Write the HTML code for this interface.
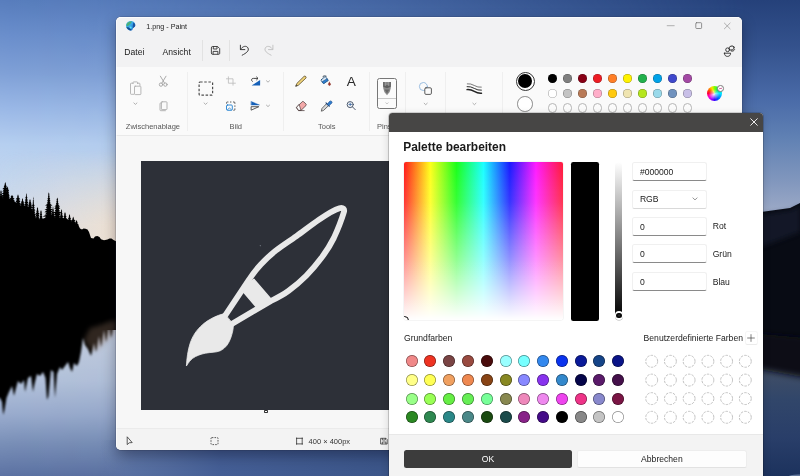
<!DOCTYPE html>
<html lang="de">
<head>
<meta charset="utf-8">
<title>1.png - Paint</title>
<style>
*{box-sizing:border-box;margin:0;padding:0}
html,body{width:800px;height:476px;overflow:hidden;background:#5a7ebb}
body{font-family:"Liberation Sans",sans-serif;color:#1b1b1b;position:relative}
.abs{position:absolute}
#win>.abs,#dlg>.abs{will-change:transform}
#bg{position:absolute;left:0;top:0;width:800px;height:476px}
#win{position:absolute;left:115.6px;top:17px;width:626.4px;height:433px;background:#f6f6f6;border-radius:5px;overflow:hidden;box-shadow:0 6px 14px rgba(0,0,20,.35),0 0 0 .5px rgba(40,50,70,.35)}
#titlebar{position:absolute;left:0;top:0;width:100%;height:49.5px;background:#f2f2f3}
#ribbon{position:absolute;left:0;top:49.5px;width:100%;height:69px;background:#fafafa;border-bottom:1px solid #e9e9e9}
#work{position:absolute;left:0;top:118.5px;width:100%;height:292px;background:#f7f7f7}
#status{position:absolute;left:0;top:410.5px;width:100%;height:23px;background:#f3f3f3;border-top:1px solid #ebebeb}
.t{position:absolute;white-space:nowrap;line-height:1}
.sep{position:absolute;width:1px;background:#e6e6e6}
.glabel{position:absolute;font-size:7.5px;color:#6b6b6b;top:105.5px;line-height:1;white-space:nowrap}
svg{position:absolute;overflow:visible}
#dlg{position:absolute;left:388.5px;top:113px;width:374.5px;height:380px;background:#fff;border-radius:3.5px 3.5px 0 0;overflow:hidden;box-shadow:0 0 0 .6px rgba(0,0,0,.3),0 2px 9px rgba(0,0,0,.16)}
#dlgbar{position:absolute;left:0;top:0;width:100%;height:18.5px;background:#474645}
#dlgfoot{position:absolute;left:0;top:321px;width:100%;height:60px;background:#f3f3f3;border-top:1px solid #e8e8e8}
.inp{position:absolute;left:244px;width:74.5px;height:19px;border:1px solid #f0f0f0;border-bottom:1px solid #8a8a8a;border-radius:2.5px;background:#fff;font-size:8.6px;line-height:18px;padding-left:6.5px;color:#1a1a1a}
.lbl{position:absolute;left:324px;font-size:8.6px;line-height:1;color:#1a1a1a}
.sw{position:absolute;width:12px;height:12px;border-radius:50%;box-shadow:inset 0 0 0 .7px rgba(0,0,0,.45)}
.cw{position:absolute;width:12.4px;height:12.4px;border-radius:50%;border:.8px dashed #a9a9a9}
.pc{position:absolute;width:9.4px;height:9.4px;border-radius:50%;box-shadow:inset 0 0 0 .6px rgba(0,0,0,.35)}
.pe{position:absolute;width:9.4px;height:9.4px;border-radius:50%;border:.8px solid #b5b5b5;background:#fbfbfb}
</style>
</head>
<body>
<!--BG-->
<svg id="bg" width="800" height="476" viewBox="0 0 800 476">
<defs>
<linearGradient id="skyL" x1="0" y1="0" x2="0" y2="1">
<stop offset="0" stop-color="#587dbd"/><stop offset=".076" stop-color="#6b8fcc"/><stop offset=".151" stop-color="#7fa0d6"/><stop offset=".227" stop-color="#9ab8e6"/><stop offset=".303" stop-color="#b6cff0"/><stop offset=".38" stop-color="#c3d6ee"/><stop offset=".5" stop-color="#d8dde6"/><stop offset=".7" stop-color="#c6d0e2"/><stop offset=".8" stop-color="#b4c3dc"/><stop offset=".87" stop-color="#9aacce"/><stop offset=".93" stop-color="#7a90b8"/><stop offset="1" stop-color="#5c72a3"/>
</linearGradient>
<linearGradient id="skyR" x1="0" y1="0" x2="0" y2="1">
<stop offset="0" stop-color="#25417a"/><stop offset=".1" stop-color="#34528d"/><stop offset=".21" stop-color="#4a6ba8"/><stop offset=".286" stop-color="#5f80b3"/><stop offset=".378" stop-color="#8096bd"/><stop offset=".44" stop-color="#9aa8c6"/><stop offset=".78" stop-color="#404e66"/><stop offset=".84" stop-color="#31466a"/><stop offset=".92" stop-color="#293e69"/><stop offset="1" stop-color="#1c325d"/>
</linearGradient>
<linearGradient id="hm" x1="0" y1="0" x2="1" y2="0">
<stop offset="0" stop-color="#000"/><stop offset=".12" stop-color="#080808"/><stop offset=".5" stop-color="#6e6e6e"/><stop offset=".93" stop-color="#fff"/><stop offset="1" stop-color="#fff"/>
</linearGradient>
<mask id="mk"><rect width="800" height="476" fill="url(#hm)"/></mask>
<linearGradient id="warm" x1="0" y1="0" x2="1" y2="0"><stop offset="0" stop-color="#e9e1dc" stop-opacity=".05"/><stop offset=".5" stop-color="#ece1d6" stop-opacity=".62"/><stop offset="1" stop-color="#f1e1cf" stop-opacity="1"/></linearGradient>
<linearGradient id="warmv" x1="0" y1="0" x2="0" y2="1"><stop offset="0" stop-color="#fff" stop-opacity="0"/><stop offset=".75" stop-color="#fff" stop-opacity="1"/><stop offset="1" stop-color="#fff" stop-opacity="1"/></linearGradient>
<mask id="wm"><rect x="0" y="150" width="130" height="100" fill="url(#warmv)"/></mask>
<filter id="b1" x="-20%" y="-20%" width="140%" height="140%"><feGaussianBlur stdDeviation="1.1"/></filter>
<filter id="b2" x="-20%" y="-20%" width="140%" height="140%"><feGaussianBlur stdDeviation="2.5"/></filter>
<filter id="b3" x="-20%" y="-40%" width="140%" height="180%"><feGaussianBlur stdDeviation="3.2"/></filter>
<filter id="b0" x="-20%" y="-20%" width="140%" height="140%"><feGaussianBlur stdDeviation=".45"/></filter>
</defs>
<rect width="800" height="476" fill="url(#skyL)"/>
<rect width="800" height="476" fill="url(#skyR)" mask="url(#mk)"/>
<rect x="0" y="150" width="130" height="100" fill="url(#warm)" mask="url(#wm)"/>
<linearGradient id="bot" gradientUnits="userSpaceOnUse" x1="100" y1="0" x2="400" y2="0"><stop offset="0" stop-color="#6077a8" stop-opacity="0"/><stop offset=".12" stop-color="#566fa2" stop-opacity=".7"/><stop offset=".4" stop-color="#445e95" stop-opacity="1"/><stop offset="1" stop-color="#3b5588" stop-opacity="1"/></linearGradient>
<rect x="100" y="440" width="300" height="36" fill="url(#bot)"/>
<!-- right hill -->
<path d="M730 219 L763 211.7 L790 208 L800 203 L800 360 L730 350 Z" fill="#080b14"/>
<path d="M730 222 L763 214.5 L790 210.5 L800 206 L800 232 L763 246 L730 250Z" fill="#1a2438" opacity=".55" filter="url(#b2)"/>
<path d="M720 330 L830 340 L830 382 L763 370 L720 364 Z" fill="#080b14" filter="url(#b3)"/>
<ellipse cx="798" cy="477" rx="10" ry="2.6" fill="#93a8c8" opacity=".6" filter="url(#b0)"/>
<!-- left trees -->
<g filter="url(#b0)" fill="#030406">
<path d="M-6 199 L10 199.5 L14 201 L20 205.5 L30 207.5 L34 213 L36 218.5 L40 219.5 L45 218 L52 218.6 L58 217.8 L67 219 L72 221.5 L78 224.5 L80 228.5 L82 229.6 L83.5 228.4 L85.5 228.8 L87.5 229.6 L89 232 L91 238 L93.5 238.4 L95 236.6 L97.2 236 L99.5 237 L101 239.2 L104 240.3 L107.5 239.4 L109.5 238.4 L111.5 238.6 L113.5 240 L116 241.2 L126 243 L126 330 L-6 330Z"/>
<path d="M5.3 182.0 L6.1 184.4 L5.7 184.6 L6.9 186.8 L6.0 187.0 L8.2 189.1 L6.6 189.4 L8.2 191.5 L6.6 191.8 L8.9 193.9 L6.9 194.1 L9.8 196.2 L7.3 196.5 L9.3 198.6 L7.1 198.9 L10.8 201.0 L7.8 201.2 L10.8 205.0 L-0.2 205.0 L2.8 201.2 L-0.2 201.0 L3.5 198.9 L1.3 198.6 L3.3 196.5 L0.8 196.2 L3.7 194.1 L1.7 193.9 L4.0 191.8 L2.4 191.5 L4.0 189.4 L2.4 189.1 L4.6 187.0 L3.7 186.8 L4.9 184.6 L4.5 184.4Z"/>
<path d="M7.6 186.2 L8.3 188.5 L7.9 188.8 L9.1 190.8 L8.3 191.0 L9.0 193.1 L8.2 193.3 L9.7 195.4 L8.6 195.7 L9.8 197.7 L8.6 197.9 L11.7 200.0 L9.5 200.2 L11.1 204.0 L4.1 204.0 L5.7 200.2 L3.5 200.0 L6.6 197.9 L5.4 197.7 L6.6 195.7 L5.5 195.4 L7.0 193.3 L6.2 193.1 L6.9 191.0 L6.1 190.8 L7.3 188.8 L6.9 188.5Z"/>
<path d="M1.0 190.0 L1.9 192.5 L1.4 192.8 L2.1 195.0 L1.5 195.2 L3.9 197.5 L2.3 197.8 L4.7 200.0 L2.7 200.2 L3.9 204.0 L-1.9 204.0 L-0.7 200.2 L-2.7 200.0 L-0.3 197.8 L-1.9 197.5 L0.5 195.2 L-0.1 195.0 L0.6 192.8 L0.1 192.5Z"/>
<path d="M12.0 195.0 L13.5 197.0 L12.7 197.2 L14.7 199.0 L13.2 199.2 L14.9 201.0 L13.3 201.2 L15.6 205.0 L8.4 205.0 L10.7 201.2 L9.1 201.0 L10.8 199.2 L9.3 199.0 L11.3 197.2 L10.5 197.0Z"/>
<path d="M18.0 194.2 L18.9 196.8 L18.4 197.0 L20.3 199.3 L19.0 199.6 L20.4 201.9 L19.1 202.1 L21.5 204.4 L19.6 204.7 L22.4 207.0 L20.0 207.2 L23.2 211.0 L12.8 211.0 L16.0 207.2 L13.6 207.0 L16.4 204.7 L14.5 204.4 L16.9 202.1 L15.6 201.9 L17.0 199.6 L15.7 199.3 L17.6 197.0 L17.1 196.8Z"/>
<path d="M22.5 198.0 L23.2 200.2 L22.8 200.5 L24.2 202.5 L23.3 202.8 L24.9 204.8 L23.6 205.0 L26.3 207.0 L24.2 207.2 L25.7 211.0 L19.3 211.0 L20.8 207.2 L18.7 207.0 L21.4 205.0 L20.1 204.8 L21.7 202.8 L20.8 202.5 L22.2 200.5 L21.8 200.2Z"/>
<path d="M26.4 193.0 L26.9 195.5 L26.6 195.8 L27.5 198.0 L26.9 198.2 L27.8 200.5 L27.0 200.8 L28.4 203.0 L27.3 203.2 L28.6 205.5 L27.4 205.8 L28.7 208.0 L27.4 208.2 L29.0 212.0 L23.8 212.0 L25.4 208.2 L24.1 208.0 L25.4 205.8 L24.2 205.5 L25.5 203.2 L24.4 203.0 L25.8 200.8 L25.0 200.5 L25.9 198.2 L25.3 198.0 L26.2 195.8 L25.9 195.5Z"/>
<path d="M30.0 199.0 L30.9 201.2 L30.4 201.4 L31.6 203.4 L30.7 203.7 L32.2 205.6 L31.0 205.8 L32.7 207.8 L31.2 208.1 L32.6 210.0 L31.2 210.2 L32.9 214.0 L27.1 214.0 L28.8 210.2 L27.4 210.0 L28.8 208.1 L27.3 207.8 L29.0 205.8 L27.8 205.6 L29.3 203.7 L28.4 203.4 L29.6 201.4 L29.1 201.2Z"/>
<path d="M33.3 196.6 L33.6 198.9 L33.4 199.2 L33.9 201.2 L33.6 201.5 L34.0 203.5 L33.6 203.8 L34.7 205.8 L33.9 206.1 L34.7 208.1 L33.9 208.4 L35.4 210.5 L34.3 210.7 L35.2 212.8 L34.1 213.0 L36.2 215.1 L34.6 215.3 L36.4 217.4 L34.7 217.6 L35.3 219.7 L34.2 219.9 L35.8 222.0 L34.4 222.2 L36.3 226.0 L30.3 226.0 L32.2 222.2 L30.8 222.0 L32.4 219.9 L31.3 219.7 L31.9 217.6 L30.2 217.4 L32.0 215.3 L30.4 215.1 L32.5 213.0 L31.4 212.8 L32.3 210.7 L31.2 210.5 L32.7 208.4 L31.9 208.1 L32.7 206.1 L31.9 205.8 L33.0 203.8 L32.6 203.5 L33.0 201.5 L32.7 201.2 L33.2 199.2 L33.0 198.9Z"/>
<path d="M37.5 207.0 L38.3 209.3 L37.9 209.6 L38.7 211.7 L38.0 211.9 L39.7 214.0 L38.5 214.2 L39.6 216.3 L38.4 216.6 L39.5 218.7 L38.4 218.9 L40.9 221.0 L39.0 221.2 L40.7 225.0 L34.3 225.0 L36.0 221.2 L34.1 221.0 L36.6 218.9 L35.5 218.7 L36.6 216.6 L35.4 216.3 L36.5 214.2 L35.3 214.0 L37.0 211.9 L36.3 211.7 L37.1 209.6 L36.7 209.3Z"/>
<path d="M41.0 210.0 L41.9 212.4 L41.4 212.7 L42.2 214.8 L41.5 215.1 L42.5 217.2 L41.7 217.4 L43.3 219.6 L42.1 219.8 L45.1 222.0 L42.8 222.2 L44.2 226.0 L37.8 226.0 L39.2 222.2 L36.9 222.0 L39.9 219.8 L38.7 219.6 L40.3 217.4 L39.5 217.2 L40.5 215.1 L39.8 214.8 L40.6 212.7 L40.1 212.4Z"/>
<path d="M48.8 192.3 L49.5 194.5 L49.1 194.8 L49.7 196.7 L49.2 197.0 L50.2 198.9 L49.5 199.2 L50.5 201.1 L49.6 201.4 L50.8 203.3 L49.7 203.6 L52.5 205.5 L50.5 205.8 L51.7 207.8 L50.1 208.0 L53.1 210.0 L50.7 210.2 L53.2 212.2 L50.8 212.4 L52.9 214.4 L50.6 214.6 L55.1 216.6 L51.6 216.8 L53.4 218.8 L50.9 219.0 L55.7 221.0 L51.9 221.2 L55.2 225.0 L42.4 225.0 L45.7 221.2 L41.9 221.0 L46.7 219.0 L44.2 218.8 L46.0 216.8 L42.5 216.6 L47.0 214.6 L44.7 214.4 L46.8 212.4 L44.4 212.2 L46.9 210.2 L44.5 210.0 L47.5 208.0 L45.9 207.8 L47.1 205.8 L45.1 205.5 L47.9 203.6 L46.8 203.3 L48.0 201.4 L47.1 201.1 L48.1 199.2 L47.4 198.9 L48.4 197.0 L47.9 196.7 L48.5 194.8 L48.1 194.5Z"/>
<path d="M53.0 206.0 L53.4 208.3 L53.2 208.5 L54.0 210.6 L53.4 210.8 L54.2 212.9 L53.6 213.1 L54.7 215.1 L53.7 215.4 L56.0 217.4 L54.4 217.7 L56.3 219.7 L54.5 220.0 L55.8 222.0 L54.3 222.2 L56.2 226.0 L49.8 226.0 L51.7 222.2 L50.2 222.0 L51.5 220.0 L49.7 219.7 L51.6 217.7 L50.0 217.4 L52.3 215.4 L51.3 215.1 L52.4 213.1 L51.8 212.9 L52.6 210.8 L52.0 210.6 L52.8 208.5 L52.6 208.3Z"/>
<path d="M57.3 197.5 L58.1 199.7 L57.7 200.0 L58.3 202.0 L57.8 202.2 L58.9 204.2 L58.0 204.4 L60.1 206.4 L58.5 206.7 L60.3 208.6 L58.7 208.9 L59.8 210.9 L58.4 211.1 L62.2 213.1 L59.5 213.3 L60.8 215.3 L58.9 215.6 L61.3 217.5 L59.1 217.8 L63.3 219.8 L60.0 220.0 L62.4 222.0 L59.6 222.2 L62.9 226.0 L51.6 226.0 L55.0 222.2 L52.2 222.0 L54.6 220.0 L51.3 219.8 L55.5 217.8 L53.3 217.5 L55.7 215.6 L53.8 215.3 L55.1 213.3 L52.4 213.1 L56.2 211.1 L54.8 210.9 L55.9 208.9 L54.3 208.6 L56.1 206.7 L54.5 206.4 L56.6 204.4 L55.7 204.2 L56.8 202.2 L56.3 202.0 L56.9 200.0 L56.5 199.7Z"/>
<path d="M61.5 209.0 L62.2 211.6 L61.8 211.8 L62.6 214.2 L62.0 214.4 L63.2 216.8 L62.2 217.1 L64.5 219.4 L62.8 219.7 L64.4 222.0 L62.8 222.2 L65.0 226.0 L58.0 226.0 L60.2 222.2 L58.6 222.0 L60.2 219.7 L58.5 219.4 L60.8 217.1 L59.8 216.8 L61.0 214.4 L60.4 214.2 L61.2 211.8 L60.8 211.6Z"/>
<path d="M65.0 212.0 L66.0 214.5 L65.4 214.8 L66.6 217.0 L65.7 217.2 L67.4 219.5 L66.1 219.8 L69.1 222.0 L66.8 222.2 L68.2 226.0 L61.8 226.0 L63.2 222.2 L60.9 222.0 L63.9 219.8 L62.6 219.5 L64.3 217.2 L63.4 217.0 L64.6 214.8 L64.0 214.5Z"/>
<path d="M69.5 214.0 L70.3 216.5 L69.9 216.8 L71.1 219.0 L70.2 219.2 L72.2 221.5 L70.7 221.8 L71.8 224.0 L70.6 224.2 L72.4 228.0 L66.6 228.0 L68.4 224.2 L67.2 224.0 L68.3 221.8 L66.8 221.5 L68.8 219.2 L67.9 219.0 L69.1 216.8 L68.7 216.5Z"/>
<path d="M73.2 216.4 L74.0 218.7 L73.6 219.0 L75.6 221.0 L74.3 221.3 L76.5 223.4 L74.7 223.6 L76.2 225.7 L74.6 225.9 L76.7 228.0 L74.8 228.2 L77.5 232.0 L68.9 232.0 L71.6 228.2 L69.7 228.0 L71.8 225.9 L70.2 225.7 L71.7 223.6 L69.9 223.4 L72.1 221.3 L70.8 221.0 L72.8 219.0 L72.4 218.7Z"/>
<path d="M76.5 220.0 L77.7 222.7 L77.1 222.9 L79.0 225.3 L77.6 225.6 L78.9 228.0 L77.6 228.2 L79.4 232.0 L73.6 232.0 L75.4 228.2 L74.1 228.0 L75.4 225.6 L74.0 225.3 L75.9 222.9 L75.3 222.7Z"/>
</g>
<g filter="url(#b1)" fill="#030406">
<path d="M-12 300 L130 300 L130 318 L118 322 L114 324 L111 338 L109 326 L106 342 L104 330 L101 347 L99 336 L96 352 L94 343 L91 356 L88 349 L85 345 L83 338 L81 352 L79 362 L77 366 L74 363 L72 372 L70 368 L68 362 L65 366 L62 370 L60 367 L57 374 L55 398 L53.5 372 L51 370 L48.5 396 L47 400 L45.5 378 L43 372 L40 376 L37 374 L34.5 384 L33 392 L31 376 L28 378 L25 392 L24 380 L21 384 L18 381 L15.5 390 L14 396 L12 386 L9 392 L6.5 398 L4.5 410 L3.2 415 L2 402 L0 398 L-12 398 Z"/>
</g>
<path d="M84 340 L90 328 L98 326 L108 322 L116 320 L116 332 L108 340 L100 348 L92 352 Z" fill="#8a6e5c" opacity=".35" filter="url(#b2)"/>
</svg>

<!--WIN-->
<div id="win"><div class="abs" style="left:-115.6px;top:-17px;width:800px;height:476px">
<div id="titlebar" style="left:115px;top:17px;width:628px"></div>
<div id="ribbon" style="left:115px;top:66.5px;width:628px"></div>
<div id="work" style="left:115px;top:135.5px;width:628px"></div>
<div id="status" style="left:115px;top:427.5px;width:628px"></div>
<div class="t" style="left:146.3px;top:23.30px;font-size:7.2px;color:#222;">1.png - Paint</div>
<div class="t" style="left:124.3px;top:47.50px;font-size:8.6px;color:#1b1b1b;">Datei</div>
<div class="t" style="left:162.6px;top:47.50px;font-size:8.6px;color:#1b1b1b;">Ansicht</div>
<div class="t" style="left:125.8px;top:122.85px;font-size:7.5px;color:#585858;">Zwischenablage</div>
<div class="t" style="left:229.5px;top:122.85px;font-size:7.5px;color:#585858;">Bild</div>
<div class="t" style="left:318px;top:122.85px;font-size:7.5px;color:#585858;">Tools</div>
<div class="t" style="left:377px;top:122.85px;font-size:7.5px;color:#585858;">Pinsel</div>
<div class="t" style="left:416px;top:122.85px;font-size:7.5px;color:#585858;">Formen</div>
<div class="t" style="left:466px;top:122.85px;font-size:7.5px;color:#585858;">Größe</div>
<div class="t" style="left:606px;top:122.85px;font-size:7.5px;color:#585858;">Farben</div>
<div class="t" style="left:308.6px;top:438.25px;font-size:7.5px;color:#333;">400 × 400px</div>
<div class="t" style="left:393px;top:438.25px;font-size:7.5px;color:#333;">Größe: 3,2KB</div>
<div class="t" style="left:346.75px;top:75.15px;font-size:13.7px;color:#2a2a2a;">A</div>
<div class="sep" style="left:201.5px;top:40px;height:21px;background:#e2e2e2"></div>
<div class="sep" style="left:229.2px;top:40px;height:21px;background:#e2e2e2"></div>
<div class="sep" style="left:187px;top:72px;height:59px;background:#efefef"></div>
<div class="sep" style="left:283px;top:72px;height:59px;background:#efefef"></div>
<div class="sep" style="left:369px;top:72px;height:59px;background:#efefef"></div>
<div class="sep" style="left:404.6px;top:72px;height:59px;background:#efefef"></div>
<div class="sep" style="left:445.4px;top:72px;height:59px;background:#efefef"></div>
<div class="sep" style="left:501.5px;top:72px;height:59px;background:#efefef"></div>
<div class="abs" style="left:140.7px;top:161px;width:249.3px;height:248.8px;background:#2d3038"></div>
<div class="abs" style="left:264.1px;top:409.7px;width:3.7px;height:3.7px;background:#fff;border:.8px solid #333;border-radius:.8px"></div>
<div class="abs" style="left:377px;top:78.4px;width:20px;height:30.4px;border:.9px solid #777;border-radius:2.5px;background:#fbfbfb"></div>
<div class="abs" style="left:378px;top:98.3px;width:18px;height:.7px;background:#c9c9c9"></div>
<div class="pc" style="left:547.7px;top:73.9px;background:#000000"></div>
<div class="pc" style="left:562.7px;top:73.9px;background:#7f7f7f"></div>
<div class="pc" style="left:577.7px;top:73.9px;background:#880015"></div>
<div class="pc" style="left:592.7px;top:73.9px;background:#ed1c24"></div>
<div class="pc" style="left:607.7px;top:73.9px;background:#ff7f27"></div>
<div class="pc" style="left:622.7px;top:73.9px;background:#fff200"></div>
<div class="pc" style="left:637.7px;top:73.9px;background:#22b14c"></div>
<div class="pc" style="left:652.7px;top:73.9px;background:#00a2e8"></div>
<div class="pc" style="left:667.7px;top:73.9px;background:#3f48cc"></div>
<div class="pc" style="left:682.7px;top:73.9px;background:#a349a4"></div>
<div class="pc" style="left:547.7px;top:88.7px;background:#ffffff"></div>
<div class="pc" style="left:562.7px;top:88.7px;background:#c3c3c3"></div>
<div class="pc" style="left:577.7px;top:88.7px;background:#b97a57"></div>
<div class="pc" style="left:592.7px;top:88.7px;background:#ffaec9"></div>
<div class="pc" style="left:607.7px;top:88.7px;background:#ffc90e"></div>
<div class="pc" style="left:622.7px;top:88.7px;background:#efe4b0"></div>
<div class="pc" style="left:637.7px;top:88.7px;background:#b5e61d"></div>
<div class="pc" style="left:652.7px;top:88.7px;background:#99d9ea"></div>
<div class="pc" style="left:667.7px;top:88.7px;background:#7092be"></div>
<div class="pc" style="left:682.7px;top:88.7px;background:#c8bfe7"></div>
<div class="pe" style="left:547.7px;top:103.2px"></div>
<div class="pe" style="left:562.7px;top:103.2px"></div>
<div class="pe" style="left:577.7px;top:103.2px"></div>
<div class="pe" style="left:592.7px;top:103.2px"></div>
<div class="pe" style="left:607.7px;top:103.2px"></div>
<div class="pe" style="left:622.7px;top:103.2px"></div>
<div class="pe" style="left:637.7px;top:103.2px"></div>
<div class="pe" style="left:652.7px;top:103.2px"></div>
<div class="pe" style="left:667.7px;top:103.2px"></div>
<div class="pe" style="left:682.7px;top:103.2px"></div>
<div class="abs" style="left:515.5px;top:71.8px;width:19px;height:19px;border-radius:50%;border:.9px solid #333;background:#fff"></div>
<div class="abs" style="left:517.85px;top:74.15px;width:14.3px;height:14.3px;border-radius:50%;background:#000"></div>
<div class="abs" style="left:517.2px;top:96.3px;width:15.6px;height:15.6px;border-radius:50%;border:.85px solid #8c8c8c;background:#fff"></div>
<div class="abs" style="left:706.7px;top:86px;width:15px;height:15px;border-radius:50%;background:radial-gradient(circle at 47% 56%,rgba(255,255,255,.95) 0,rgba(255,255,255,.55) 16%,rgba(255,255,255,0) 46%),conic-gradient(from 0deg,#7dff00,#00e070 12%,#00e5ff 25%,#0060ff 40%,#3a00ff 50%,#c000ff 60%,#ff00c0 68%,#ff0030 76%,#ff5a00 84%,#ffe000 93%,#7dff00)"></div>
<div class="abs" style="left:716.9px;top:84.8px;width:6.8px;height:6.8px;border-radius:50%;border:.9px solid #7a7a7a;background:#fff"></div>
<div class="abs" style="left:719px;top:87.9px;width:2.8px;height:.8px;background:#d070a0;transform:rotate(-12deg)"></div>
<svg width="800" height="476" viewBox="0 0 800 476" style="left:0;top:0" fill="none" stroke-linecap="round" stroke-linejoin="round">
<defs>
<linearGradient id="pi" x1="0" y1="0" x2="1" y2="1"><stop offset="0" stop-color="#58c8ee"/><stop offset=".5" stop-color="#36a4e6"/><stop offset="1" stop-color="#1f6ac8"/></linearGradient>
</defs>
<!-- app icon -->
<g>
<path d="M126 26.2 C125.6 23 128.2 20.8 131 20.9 C133.8 21 135.6 23 135.2 25.6 C135 27.2 133.6 27.4 133 28.2 C132.4 29.2 132.8 30.2 131.2 30.4 C128.6 30.6 126.3 28.8 126 26.2 Z" fill="url(#pi)"/>
<path d="M126.6 24.2 C127.6 22 130 21 132 21.6 C131 23.4 129.4 25.4 127 26.6 C126.5 25.8 126.4 25 126.6 24.2Z" fill="#4db070" opacity=".95"/>
<path d="M126.4 27 C127.2 29.4 129.4 30.6 131.2 30.4 C131.6 29 130.6 28 129 27.6 Z" fill="#164a90"/>
<path d="M133.4 22.4 C134.8 23.2 135.6 24.6 135.2 25.9 C134.6 27 133.6 27.4 133 28.2 C132.6 26 132.8 24 133.4 22.4Z" fill="#1c54a0"/>
<circle cx="130.6" cy="27.6" r="1.1" fill="#58e0f8"/>
</g>
<!-- window controls -->
<path d="M667.2 25.7 H674.2" stroke="#9a9a9a" stroke-width=".75"/>
<rect x="695.8" y="22.7" width="5.8" height="5.8" rx=".8" stroke="#707070" stroke-width=".75"/>
<path d="M724.4 23.1 L730.1 28.8 M730.1 23.1 L724.4 28.8" stroke="#959595" stroke-width=".75"/>
<!-- people icon -->
<g stroke="#2a2a2a" stroke-width=".9">
<ellipse cx="731.6" cy="48" rx="2.6" ry="2" transform="rotate(-20 731.6 48)"/>
<circle cx="727.6" cy="49.8" r="1.9"/>
<path d="M724.4 53.2 H730.6 C730.6 55.2 729.4 56.4 727.5 56.4 C725.6 56.4 724.4 55.2 724.4 53.2Z"/>
<path d="M731.2 51 C732.8 51.6 734 50.8 734.6 49.6"/>
</g>
<!-- save -->
<g stroke="#333" stroke-width=".9">
<path d="M211.4 47.5 Q211.4 46.5 212.4 46.5 H217.6 L219.7 48.6 V53.3 Q219.7 54.3 218.7 54.3 H212.4 Q211.4 54.3 211.4 53.3Z"/>
<path d="M213.3 46.7 V49 H217 V46.8"/>
<path d="M213.1 54.1 V51.4 H217.9 V54.1"/>
</g>
<!-- undo -->
<g stroke="#333" stroke-width=".95">
<path d="M240.4 45.2 V49.6 H244.8"/>
<path d="M240.6 49.4 C242.4 46 246.6 45.2 248 48 C249.4 50.8 246.4 53 242.2 55.2"/>
</g>
<!-- redo -->
<g stroke="#c2c2c2" stroke-width=".95">
<path d="M272.9 45.2 V49.6 H268.5"/>
<path d="M272.7 49.4 C270.9 46 266.7 45.2 265.3 48 C263.9 50.8 266.9 53 271.1 55.2"/>
</g>
<!-- paste (disabled) -->
<g stroke="#ababab" stroke-width=".85">
<path d="M133 83.2 H131.2 Q130.5 83.2 130.5 83.9 V93.6 Q130.5 94.3 131.2 94.3 H133.6"/>
<path d="M137.6 83.2 H139.2 Q139.9 83.2 139.9 83.9 V85.4"/>
<path d="M133 83.6 V82.6 Q133 81.9 133.7 81.9 H136.9 Q137.6 81.9 137.6 82.6 V83.6"/>
<rect x="134.5" y="86.2" width="6.4" height="8.4" rx=".7"/>
</g>
<!-- chevrons -->
<g stroke="#9c9c9c" stroke-width=".8">
<path d="M133.85 102.95 L135.40 104.40 L136.95 102.95"/>
<path d="M204.05 102.95 L205.60 104.40 L207.15 102.95"/>
<path d="M266.45 80.75 L268.00 82.20 L269.55 80.75"/>
<path d="M266.45 105.15 L268.00 106.60 L269.55 105.15"/>
<path d="M385.8 102.8 L387 103.9 L388.2 102.8" stroke="#b0b0b0" stroke-width=".7"/>
<path d="M424.15 103.25 L425.70 104.70 L427.25 103.25"/>
<path d="M472.85 103.25 L474.40 104.70 L475.95 103.25"/>
</g>
<!-- scissors (disabled) -->
<g stroke="#a2a2a2" stroke-width=".9">
<path d="M160.4 76.2 L164.6 83.2 M166 76.2 L161.8 83.2"/>
<circle cx="161" cy="84.6" r="1.7"/><circle cx="165.4" cy="84.6" r="1.7"/>
</g>
<!-- copy (disabled) -->
<g stroke="#a8a8a8" stroke-width=".85">
<rect x="161.4" y="101.8" width="5.6" height="7.8" rx=".7"/>
<path d="M161.2 103 H160.6 Q160 103 160 103.7 L160 109.9 Q160 110.7 160.8 110.7 H165.4"/>
</g>
<!-- select -->
<rect x="199.1" y="82" width="13.5" height="13.2" rx="1" stroke="#4c4c4c" stroke-width="1.2" stroke-dasharray="2.5 1.65" stroke-linecap="butt"/>
<!-- crop (disabled) -->
<g stroke="#bdbdbd" stroke-width=".85">
<path d="M228.4 76.8 V83.2 H235.4"/>
<path d="M226.4 78.8 H233 V85.2"/>
</g>
<!-- resize -->
<g stroke-width=".9">
<path d="M226.5 103.6 V102.8 Q226.5 102 227.4 102 H228.4 M230 102 H231.4 M233 102 H234 Q234.9 102 234.9 102.9 V103.8 M234.9 105.4 V106.8 M234.9 108.4 V109.4 Q234.9 110.3 234 110.3 H233.4" stroke="#4a4a4a" stroke-linecap="butt"/>
<rect x="226.5" y="105" width="5.8" height="5.3" rx="1" stroke="#1f7fd0"/>
<path d="M227.4 109.7 L229.4 108 L231.4 109.7" stroke="#1f7fd0" stroke-width=".75"/>
</g>
<!-- rotate -->
<g>
<path d="M251.6 85.6 L260.1 85.6 L260.1 80 Z" fill="#1560b8"/>
<path d="M252.3 81.4 C251 80.4 251.2 78.4 253.4 78.4 H257.6" stroke="#333" stroke-width=".9"/>
<path d="M256.6 77 L258 78.4 L256.6 79.8" stroke="#333" stroke-width=".9"/>
</g>
<!-- flip -->
<g>
<path d="M251.3 101.5 L259.5 105 H251.3Z" fill="#1560b8" stroke="#1560b8" stroke-width=".4"/>
<path d="M251.5 106.7 H258.8 L251.5 110Z" stroke="#333" stroke-width=".8"/>
</g>
<!-- pencil -->
<g stroke="#4a3c1e" stroke-width=".75">
<path d="M295.9 85.9 L296.8 83.5 L304 76.4 Q304.9 75.7 305.7 76.5 Q306.5 77.3 305.8 78.2 L298.5 85.1 Z" fill="#f3d67a"/>
<path d="M295.9 85.9 L296.9 85.6" stroke="#333" stroke-width=".8"/>
</g>
<!-- eraser -->
<g stroke="#4a3a3a" stroke-width=".75">
<path d="M296.6 107.4 L302.2 101.7 Q302.9 101.1 303.6 101.7 L306 104.1 Q306.6 104.8 306 105.5 L301 110.4 H298.6 Z" fill="#f3a9a9"/>
<path d="M296.6 107.4 L298.6 110.4 H301 L299.2 104.8Z" fill="#fdfdfd" stroke-width=".65"/>
<path d="M298.8 110.6 H304.2"/>
</g>
<!-- bucket -->
<g stroke-width=".8">
<path d="M321.4 79.6 L325.3 76.4 L328.2 80.5 L324 83.4 Q323.4 83.7 323 83.2 L321.2 80.6 Q321 80 321.4 79.6Z" fill="#dfeaf6" stroke="#1f4e79"/>
<path d="M322.2 81.6 L327.3 78.6 L328.2 80.5 L324 83.4 Q323.4 83.7 323 83.2Z" fill="#2f7fd0" stroke="#1f4e79" stroke-width=".5"/>
<path d="M323 76.9 Q322.8 75.6 324.4 75.8 L326.2 76.2" stroke="#2a3a4a" stroke-width=".8"/>
<path d="M329.4 82.2 Q330.9 84 330.6 84.8 Q330 85.7 329 85.4 Q328 84.8 328.4 83.8 Q328.7 83 329.4 82.2Z" fill="#a5362a" stroke="#7a2418" stroke-width=".4"/>
</g>
<!-- picker -->
<g stroke-width=".85">
<path d="M321.4 110.8 L322 108.4 L326.6 103.6 L328.6 105.6 L323.8 110.2 Z" fill="#d8d8d8" stroke="#555"/>
<path d="M326 102.8 L329.4 106.2" stroke="#1c3f70" stroke-width="1.1"/>
<path d="M327.4 104.2 L329.4 101.6 Q330.6 100.4 331.6 101.4 Q332.6 102.4 331.4 103.6 L328.8 105.6 Z" fill="#2f7fd0" stroke="#1c4f90" stroke-width=".7"/>
</g>
<!-- magnifier -->
<g stroke="#3a4a60" stroke-width=".9">
<circle cx="350.2" cy="104.6" r="3.05"/>
<path d="M352.5 106.9 L355.3 109.7"/>
<path d="M350.2 103 V105.8 M348.8 104.4 H351.6" stroke="#2a5a9a" stroke-width=".75"/>
</g>
<!-- brush in button -->
<g>
<path d="M383.2 82 H390.8 V88 Q390.6 91.8 387 95.2 Q383.4 91.8 383.2 88Z" fill="#8a8a8a"/>
<path d="M383.2 82 H390.8 V86.8 L387 88.2 L383.2 86.8Z" fill="#5e5e5e"/>
<path d="M385.2 82.4 V85.4 M387 82.4 V84.8 M388.8 82.4 V85.4" stroke="#e4e4e4" stroke-width=".6"/>
<path d="M384.6 89.5 L387 93.6 L389.4 89.5Z" fill="#666"/>
</g>
<!-- shapes -->
<circle cx="423.4" cy="86.5" r="4" stroke="#8fb5dc" stroke-width=".9"/>
<rect x="424.8" y="87.8" width="6.6" height="6.6" rx="1.2" fill="#fbfbfb" stroke="#4a4a4a" stroke-width=".9"/>
<!-- size lines -->
<g stroke="#222">
<path d="M467.3 83.8 Q470.8 83.4 474.3 85.5 T481.3 87.2" stroke-width=".6"/>
<path d="M467.1 86.6 Q470.8 86.3 474.3 88.4 T481.4 90.2" stroke-width=".95"/>
<path d="M467 89.6 Q470.8 89.3 474.3 91.4 T481.5 93.2" stroke-width="1.45"/>
</g>
<!-- canvas brush -->
<g id="cbrush">
<path d="M224.6 316.4 L248.2 280.8 C252 275 256 269.5 260.8 264.4 C265.5 259.5 270.5 254.8 275.9 250.5 C282.5 245.6 289.6 241 296.5 236.1 C304 230.7 311.4 225 319.1 219.7 C325.8 215 333.5 210 339.5 208.2 C343 207.2 345 209 343.8 212.4 C341.5 220 338 229 333.9 237.9 C330.4 245 326 251.8 321.3 258.1 C316.7 264.3 311.7 270.2 306.2 275.7 C300.7 281.2 294.7 286.3 288.5 290.9 C283 295 277 298 270.9 301 L232.6 323.4" stroke="#e9e9e9" stroke-width="5.8" fill="none" stroke-linejoin="round" stroke-linecap="round"/>
<path d="M241.2 289.2 L254 279.4 L270.4 298.6 L256.6 307.2 Z" fill="#e9e9e9" stroke="#e9e9e9" stroke-width="1.5"/>
<path d="M224.2 313.6 C217 315.2 208.5 319.5 202.8 324.4 C196.5 329.8 192.4 336.4 190.2 343.1 C187.8 350.4 186.8 358.4 186.4 366 C188.6 362.6 190.2 360.2 192.7 358.3 C196.4 355.6 200.8 354.2 205.3 353.2 C210.4 352.2 216 352.6 220.4 350.7 C225.6 348.3 228.8 343.4 230.7 338.1 C232.3 333.6 233.6 328.4 233.4 324.6 Z" fill="#e9e9e9" stroke="#e9e9e9" stroke-width=".8" stroke-linejoin="round"/>
<circle cx="260.2" cy="245.8" r=".45" fill="#cfd6e4"/>
</g>
<!-- status bar icons -->
<g stroke="#333" stroke-width=".8">
<path d="M127.2 437.2 L127.2 444.6 L129.2 442.8 L131.8 442.6 Z"/>
<rect x="211" y="437.6" width="7" height="7" rx=".8" stroke-dasharray="1.6 1.1" stroke-linecap="butt"/>
<path d="M296.6 437.6 V444.6 M302.2 437.6 V444.6 M296 438.3 H302.9 M296 443.9 H302.9" stroke-linecap="butt"/>
<path d="M381 438.3 H386 L387.2 439.5 V444 H381Z M382.3 438.5 V440 H385.3 V438.5 M382.3 443.8 V442 H385.9 V443.8" stroke-width=".75"/>
</g>
</svg>

</div><div class="abs" style="left:0;top:0;width:100%;height:100%;border-radius:5px;box-shadow:inset 0 .8px 0 rgba(255,255,255,.95),inset .8px 0 0 rgba(255,255,255,.7)"></div></div>
<!--DLG-->
<div id="dlg"><div class="abs" style="left:-388.5px;top:-113px;width:800px;height:600px">
<div id="dlgbar" style="left:388.5px;top:113px;width:374.5px"></div>
<svg width="8" height="8" viewBox="0 0 8 8" style="left:750px;top:118.3px"><path d="M.7 .7 L7.3 7.3 M7.3 .7 L.7 7.3" stroke="#fff" stroke-width=".9" stroke-linecap="round"/></svg>
<div class="t" style="left:403.2px;top:142.1px;font-size:11.95px;font-weight:700;color:#1a1a1a;letter-spacing:0">Palette bearbeiten</div>
<div class="abs" style="left:404px;top:161.7px;width:159.4px;height:158.7px;border-radius:2px;background:linear-gradient(to bottom,rgba(255,255,255,0) 0%,rgba(255,255,255,.12) 25%,rgba(255,255,255,.5) 60%,rgba(255,255,255,.88) 90%,#fff 100%),linear-gradient(to right,#ff1a1a 0%,#ffff1a 16.5%,#1aff1a 33%,#1affff 50%,#1a1aff 66.5%,#ff1aff 83%,#ff1a3a 100%);box-shadow:0 0 0 .5px rgba(0,0,0,.08)"></div>
<div class="abs" style="left:404.2px;top:310px;width:12px;height:10.3px;overflow:hidden"><div class="abs" style="left:-4.5px;top:5.8px;width:9px;height:9px;border-radius:50%;border:1.45px solid #0a0a0a"></div></div>
<div class="abs" style="left:571.4px;top:161.7px;width:27.2px;height:159.1px;border-radius:2.2px;background:#000"></div>
<div class="abs" style="left:615.1px;top:161.5px;width:7.4px;height:156px;border-radius:3.5px;background:linear-gradient(to bottom,#fff 0%,#000 100%)"></div>
<div class="abs" style="left:614.6px;top:311.4px;width:8.2px;height:8.2px;border-radius:50%;background:#fff;box-shadow:0 .6px .6px rgba(0,0,0,.35)"></div>
<div class="abs" style="left:615.8px;top:312.6px;width:5.8px;height:5.8px;border-radius:50%;background:radial-gradient(circle,#333 0,#0a0a0a 40%)"></div>
<div class="inp" style="left:632.4px;top:162.2px">#000000</div>
<div class="inp" style="left:632.4px;top:189.6px;border-bottom-color:#d9d9d9;line-height:17.2px">RGB</div>
<div class="inp" style="left:632.4px;top:216.8px">0</div>
<div class="inp" style="left:632.4px;top:244.3px">0</div>
<div class="inp" style="left:632.4px;top:271.6px">0</div>
<svg width="6" height="4" viewBox="0 0 6 4" style="left:692px;top:197.4px"><path d="M.9 .9 L3 2.9 L5.1 .9" stroke="#6a6a6a" stroke-width=".7" fill="none" stroke-linecap="round" stroke-linejoin="round"/></svg>
<div class="lbl" style="left:712.7px;top:222.3px">Rot</div>
<div class="lbl" style="left:712.7px;top:250.1px">Grün</div>
<div class="lbl" style="left:712.7px;top:277.6px">Blau</div>
<div class="lbl" style="left:404px;top:333.5px">Grundfarben</div>
<div class="lbl" style="left:643.6px;top:333.5px">Benutzerdefinierte Farben</div>
<div class="abs" style="left:745px;top:330.5px;width:13px;height:14.5px;border:1px solid #f6f6f6;border-bottom-color:#ebebeb;border-radius:2.5px;background:#fff"></div>
<svg width="8" height="8" viewBox="0 0 8 8" style="left:747.4px;top:333.5px"><path d="M4 .6 V7.4 M.6 4 H7.4" stroke="#3a3a3a" stroke-width=".65" stroke-linecap="round"/></svg>
<div class="sw" style="left:405.6px;top:355.3px;background:#f08888"></div>
<div class="sw" style="left:424.4px;top:355.3px;background:#ee3322"></div>
<div class="sw" style="left:443.1px;top:355.3px;background:#7a4444"></div>
<div class="sw" style="left:461.9px;top:355.3px;background:#994a40"></div>
<div class="sw" style="left:480.7px;top:355.3px;background:#4a0c0c"></div>
<div class="sw" style="left:499.5px;top:355.3px;background:#99ffff"></div>
<div class="sw" style="left:518.2px;top:355.3px;background:#77ffff"></div>
<div class="sw" style="left:537.0px;top:355.3px;background:#3388ee"></div>
<div class="sw" style="left:555.8px;top:355.3px;background:#0a33ee"></div>
<div class="sw" style="left:574.5px;top:355.3px;background:#0a1a99"></div>
<div class="sw" style="left:593.3px;top:355.3px;background:#154488"></div>
<div class="sw" style="left:612.1px;top:355.3px;background:#0a1488"></div>
<div class="sw" style="left:405.6px;top:374.1px;background:#ffff88"></div>
<div class="sw" style="left:424.4px;top:374.1px;background:#ffff55"></div>
<div class="sw" style="left:443.1px;top:374.1px;background:#f0a060"></div>
<div class="sw" style="left:461.9px;top:374.1px;background:#ee8850"></div>
<div class="sw" style="left:480.7px;top:374.1px;background:#884415"></div>
<div class="sw" style="left:499.5px;top:374.1px;background:#888822"></div>
<div class="sw" style="left:518.2px;top:374.1px;background:#8888ff"></div>
<div class="sw" style="left:537.0px;top:374.1px;background:#8833ee"></div>
<div class="sw" style="left:555.8px;top:374.1px;background:#3388cc"></div>
<div class="sw" style="left:574.5px;top:374.1px;background:#05054a"></div>
<div class="sw" style="left:593.3px;top:374.1px;background:#5a1a6a"></div>
<div class="sw" style="left:612.1px;top:374.1px;background:#44104a"></div>
<div class="sw" style="left:405.6px;top:392.6px;background:#99ff88"></div>
<div class="sw" style="left:424.4px;top:392.6px;background:#99ff55"></div>
<div class="sw" style="left:443.1px;top:392.6px;background:#66ee44"></div>
<div class="sw" style="left:461.9px;top:392.6px;background:#66ee55"></div>
<div class="sw" style="left:480.7px;top:392.6px;background:#77ff99"></div>
<div class="sw" style="left:499.5px;top:392.6px;background:#888850"></div>
<div class="sw" style="left:518.2px;top:392.6px;background:#ee88bb"></div>
<div class="sw" style="left:537.0px;top:392.6px;background:#ee88ee"></div>
<div class="sw" style="left:555.8px;top:392.6px;background:#ee44ee"></div>
<div class="sw" style="left:574.5px;top:392.6px;background:#ee3388"></div>
<div class="sw" style="left:593.3px;top:392.6px;background:#8888cc"></div>
<div class="sw" style="left:612.1px;top:392.6px;background:#7a1544"></div>
<div class="sw" style="left:405.6px;top:411.3px;background:#2a8822"></div>
<div class="sw" style="left:424.4px;top:411.3px;background:#2e8850"></div>
<div class="sw" style="left:443.1px;top:411.3px;background:#2a8888"></div>
<div class="sw" style="left:461.9px;top:411.3px;background:#4a8888"></div>
<div class="sw" style="left:480.7px;top:411.3px;background:#1a4a10"></div>
<div class="sw" style="left:499.5px;top:411.3px;background:#1a4a4a"></div>
<div class="sw" style="left:518.2px;top:411.3px;background:#882288"></div>
<div class="sw" style="left:537.0px;top:411.3px;background:#440a88"></div>
<div class="sw" style="left:555.8px;top:411.3px;background:#000000"></div>
<div class="sw" style="left:574.5px;top:411.3px;background:#888888"></div>
<div class="sw" style="left:593.3px;top:411.3px;background:#c4c4c4"></div>
<div class="sw" style="left:612.1px;top:411.3px;background:#ffffff"></div>
<svg width="800" height="476" viewBox="0 0 800 476" style="left:0;top:0" fill="none" stroke="#b2b2b2" stroke-width=".8" stroke-dasharray="2.55 1.19"><circle cx="651.7" cy="361.3" r="5.95"/><circle cx="670.4" cy="361.3" r="5.95"/><circle cx="689.1" cy="361.3" r="5.95"/><circle cx="707.9" cy="361.3" r="5.95"/><circle cx="726.6" cy="361.3" r="5.95"/><circle cx="745.3" cy="361.3" r="5.95"/><circle cx="651.7" cy="380.1" r="5.95"/><circle cx="670.4" cy="380.1" r="5.95"/><circle cx="689.1" cy="380.1" r="5.95"/><circle cx="707.9" cy="380.1" r="5.95"/><circle cx="726.6" cy="380.1" r="5.95"/><circle cx="745.3" cy="380.1" r="5.95"/><circle cx="651.7" cy="398.6" r="5.95"/><circle cx="670.4" cy="398.6" r="5.95"/><circle cx="689.1" cy="398.6" r="5.95"/><circle cx="707.9" cy="398.6" r="5.95"/><circle cx="726.6" cy="398.6" r="5.95"/><circle cx="745.3" cy="398.6" r="5.95"/><circle cx="651.7" cy="417.3" r="5.95"/><circle cx="670.4" cy="417.3" r="5.95"/><circle cx="689.1" cy="417.3" r="5.95"/><circle cx="707.9" cy="417.3" r="5.95"/><circle cx="726.6" cy="417.3" r="5.95"/><circle cx="745.3" cy="417.3" r="5.95"/></svg>
<div id="dlgfoot" style="left:388.5px;top:434px;width:374.5px"></div>
<div class="abs" style="left:404px;top:449.8px;width:168px;height:18.4px;border-radius:2.5px;background:#3c3c3c;color:#fff;font-size:8.6px;line-height:18.4px;text-align:center;font-weight:400">OK</div>
<div class="abs" style="left:576.6px;top:449.8px;width:170.6px;height:18.4px;border-radius:2.5px;background:#fdfdfd;border:1px solid #ededed;border-bottom-color:#e2e2e2;color:#1a1a1a;font-size:8.6px;line-height:16.4px;text-align:center">Abbrechen</div>
</div></div>
</body>
</html>
